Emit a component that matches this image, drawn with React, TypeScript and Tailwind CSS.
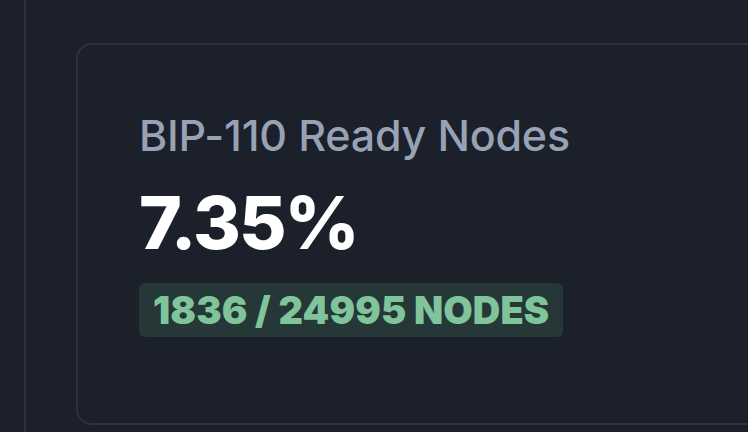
export default function App() {
  return (
    <div className="flex h-[432px] w-[748px] overflow-hidden bg-[#1b202b] font-['Inter',sans-serif]">
      {/* sidebar edge */}
      <div className="h-full w-[26px] shrink-0 border-r-2 border-[#2a303c]" />
      <div className="flex-1 pl-[50px] pt-[43px]">
        <div className="h-[382px] w-[720px] rounded-[16px] border-2 border-[#2c3240] pl-[61px] pt-[69px]">
          <div className="text-[43px] leading-none font-medium tracking-[-0.2px] text-[#97a2b5]">
            BIP-110 Ready Nodes
          </div>
          <div className="mt-[29px] text-[73px] leading-none font-extrabold tracking-[-2px] text-white">
            7.35%
          </div>
          <div className="mt-[24px] inline-flex h-[54px] items-center rounded-[6px] bg-[#263738] px-[14px] text-[38px] font-black tracking-[0.1px] text-[#7fc49a]">
            1836 / 24995 NODES
          </div>
        </div>
      </div>
    </div>
  );
}
